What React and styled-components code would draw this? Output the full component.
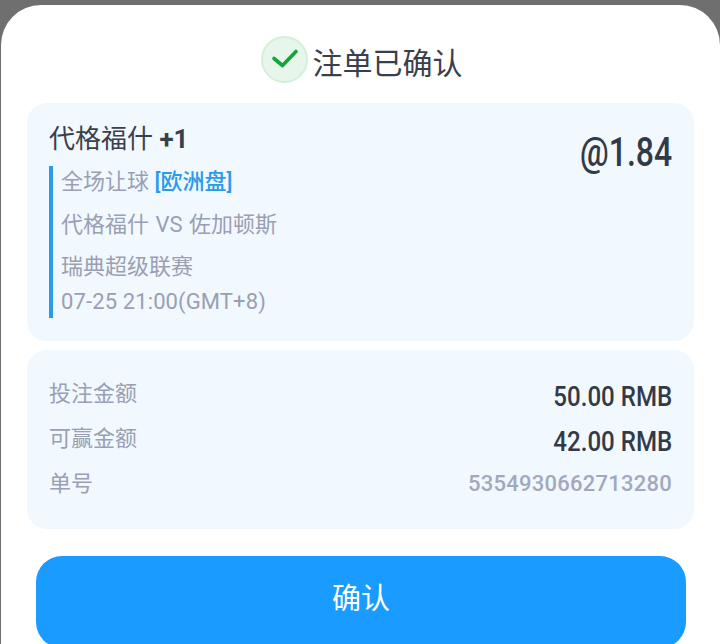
import React from "react";
import styled, { createGlobalStyle } from "styled-components";

const GlobalStyle = createGlobalStyle`
    html, body {
        margin: 0;
        padding: 0;
        height: 100%;
        background: #6f6f6f;
        overflow: hidden;
    }
    body {
        font-family: Roboto, "Noto Sans CJK SC", sans-serif;
    }
`;

function App() {
    return (
        <Page>
            <GlobalStyle />
            <Sheet>
                <Title>
                    <CheckBadge>
                        <svg width="30" height="30" viewBox="0 0 30 30" fill="none">
                            <path
                                d="M5 14.5 L13.5 21.5 L27 7.5"
                                stroke="#12a53c"
                                strokeWidth="3.6"
                                strokeLinecap="round"
                                strokeLinejoin="round"
                            />
                        </svg>
                    </CheckBadge>
                    <TitleText>注单已确认</TitleText>
                </Title>
                <BetCard>
                    <BetHeader>
                        <Selection>
                            代格福什 <b>+1</b>
                        </Selection>
                        <Odds>@1.84</Odds>
                    </BetHeader>
                    <Details>
                        <Market>
                            全场让球 <span>[欧洲盘]</span>
                        </Market>
                        <Teams>代格福什 VS 佐加顿斯</Teams>
                        <League>瑞典超级联赛</League>
                        <KickOff>07-25 21:00(GMT+8)</KickOff>
                    </Details>
                </BetCard>
                <SummaryCard>
                    <Row>
                        <Label>投注金额</Label>
                        <Amount>50.00 RMB</Amount>
                    </Row>
                    <Row>
                        <Label>可赢金额</Label>
                        <Amount>42.00 RMB</Amount>
                    </Row>
                    <Row>
                        <Label>单号</Label>
                        <OrderNo>5354930662713280</OrderNo>
                    </Row>
                </SummaryCard>
                <ConfirmButton>确认</ConfirmButton>
            </Sheet>
        </Page>
    );
}

export default App;

const Page = styled.div`
    width: 720px;
    height: 644px;
    padding: 5px 0 0 1px;
    box-sizing: border-box;
    overflow: hidden;
`;
const Sheet = styled.div`
    width: 719px;
    height: 660px;
    box-sizing: border-box;
    padding: 0 26px 0 26px;
    background: #ffffff;
    border-radius: 40px 40px 0 0;
    display: flex;
    flex-direction: column;
`;
const Title = styled.div`
    height: 98px;
    display: flex;
    align-items: center;
    justify-content: center;
    padding: 10px 0 0 2px;
    box-sizing: border-box;
    gap: 5px;
`;
const CheckBadge = styled.div`
    width: 47px;
    height: 47px;
    box-sizing: border-box;
    border-radius: 50%;
    background: #e6f6ea;
    border: 2px solid #d3efd9;
    display: flex;
    align-items: center;
    justify-content: center;
`;
const TitleText = styled.div`
    font-size: 30px;
    color: #3a3f4c;
    line-height: 40px;
    margin-top: 10px;
`;
const BetCard = styled.div`
    height: 238px;
    box-sizing: border-box;
    background: #f1f8fe;
    border-radius: 20px;
    padding: 18px 22px 0 22px;
`;
const BetHeader = styled.div`
    display: flex;
    justify-content: space-between;
    align-items: flex-start;
`;
const Selection = styled.div`
    font-size: 26px;
    line-height: 36px;
    color: #3a3f4c;
    b {
        font-weight: 700;
    }
`;
const Odds = styled.div`
    font-size: 40px;
    line-height: 58px;
    font-weight: 500;
    color: #333a47;
    margin-top: 3px;
    transform: scaleX(0.8);
    transform-origin: right center;
`;
const Details = styled.div`
    height: 152px;
    box-sizing: border-box;
    border-left: 4px solid #2a9bea;
    padding: 1px 0 0 8px;
    margin-top: -16px;
    font-size: 22px;
    color: #9a9fb4;
    display: flex;
    flex-direction: column;
`;
const Market = styled.div`
    line-height: 30px;
    margin-bottom: 13px;
    span {
        color: #2a9bea;
        font-weight: 500;
    }
`;
const Teams = styled.div`
    line-height: 30px;
    margin-bottom: 12px;
    word-spacing: 1px;
`;
const League = styled.div`
    line-height: 30px;
    margin-bottom: 5px;
`;
const KickOff = styled.div`
    line-height: 30px;
    letter-spacing: 0.12px;
`;
const SummaryCard = styled.div`
    margin-top: 9px;
    height: 179px;
    box-sizing: border-box;
    background: #f1f8fe;
    border-radius: 20px;
    padding: 26px 22px 0 22px;
    display: flex;
    flex-direction: column;
    gap: 15px;
`;
const Row = styled.div`
    height: 30px;
    display: flex;
    justify-content: space-between;
    align-items: center;
`;
const Label = styled.div`
    font-size: 22px;
    color: #9a9fb4;
`;
const Amount = styled.div`
    font-size: 28px;
    font-weight: 500;
    color: #333a47;
    margin-top: 10px;
    transform: scaleX(0.86);
    transform-origin: right center;
`;
const OrderNo = styled.div`
    font-size: 22px;
    font-weight: 500;
    color: #a3a8bd;
    margin-top: 4px;
    letter-spacing: 0.25px;
`;
const ConfirmButton = styled.button`
    margin: 27px 8px 0 9px;
    height: 92px;
    flex: none;
    border: none;
    border-radius: 26px;
    background: #1a9bff;
    color: #ffffff;
    font-family: inherit;
    font-size: 29px;
    padding: 0 0 12px;
`;
